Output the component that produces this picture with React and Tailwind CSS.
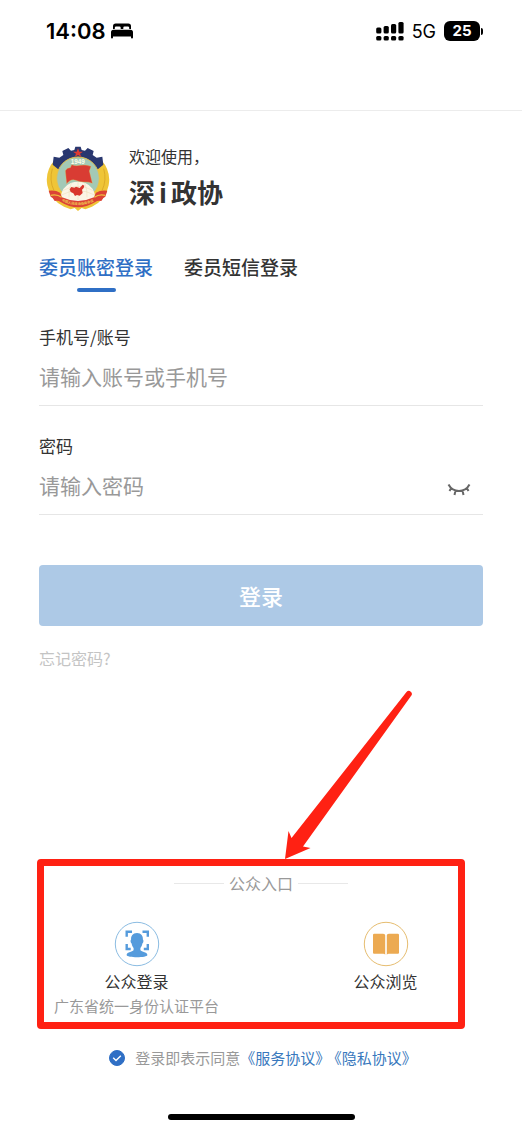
import React from "react";

function BedIcon() {
  return (
    <svg viewBox="0 0 22 16" className="h-4 w-[22px]" fill="#000" aria-hidden="true">
      <path d="M2 6V3.2A2.7 2.7 0 0 1 4.700.5h12.600A2.700 2.700 0 0 1 20 3.200V6h-1.800V4.800a1.300 1.300 0 0 0-1.300-1.300h-3.300a1.300 1.300 0 0 0-1.300 1.300V6H9.700V4.800a1.300 1.300 0 0 0-1.300-1.300H5.100a1.300 1.300 0 0 0-1.300 1.300V6z" />
      <path d="M2.500 6.800h17A2.500 2.500 0 0 1 22 9.300v5.200a1 1 0 0 1-2 0V13.500H2v1a1 1 0 0 1-2 0V9.300a2.500 2.500 0 0 1 2.500-2.500z" />
    </svg>
  );
}

function SignalIcon() {
  return (
    <svg viewBox="0 0 28 19" className="h-[19px] w-7" fill="#000" aria-hidden="true">
      <rect x="0.200" y="5.500" width="5.200" height="6" rx="1.500" />
      <rect x="7.600" y="4" width="5.200" height="7.500" rx="1.500" />
      <rect x="15" y="2" width="5.200" height="9.500" rx="1.500" />
      <rect x="22.400" y="0" width="5.200" height="11.500" rx="1.500" />
      <rect x="0.200" y="14" width="5.200" height="4.500" rx="1.500" />
      <rect x="7.600" y="14" width="5.200" height="4.500" rx="1.500" />
      <rect x="15" y="14" width="5.200" height="4.500" rx="1.500" />
      <rect x="22.400" y="14" width="5.200" height="4.500" rx="1.500" />
    </svg>
  );
}

function Emblem() {
  return (
    <svg viewBox="30 24 192 198" className="h-[66px] w-16 shrink-0" role="img" aria-label="政协会徽">
      <path d="M56 66Q26 100 34 142Q42 186 84 206L104 214 116 210 126 219 137 210 148 214 168 206Q210 186 218 142Q226 100 196 66L126 60Z" fill="#efc537" />
      <path d="M49 92Q39 126 54 158M203 92Q213 126 198 158" fill="none" stroke="#dcab28" strokeWidth="3" />
      <path
        d="M50 80 53 56 70 59 82 51 79 39 97 30 105 38 115 36 118 26H134L137 36 147 38 155 30 173 39 170 51 182 59 199 56 202 80 178 100H74Z"
        fill="#29376f"
      />
      <circle cx="126" cy="121" r="64" fill="#a3c9b6" stroke="#e7c34c" strokeWidth="3" />
      <path d="M126 31l4 10h11l-9 6 4 10-10-6-10 6 4-10-9-6h11z" fill="#dd3b32" />
      <text x="125" y="78" textAnchor="middle" className="font-['Liberation_Sans',sans-serif] text-[19px] font-bold" fill="#fffce8">1949</text>
      <path d="M74 180Q76 147 104 135q22-8 44 0 28 12 30 45-24 14-52 14t-52-14z" fill="#fbf5e6" />
      <g fill="none" stroke="#e8d6a8" strokeWidth="1.200">
        <path d="M82 157q44-24 88 0M76 171q50-26 100 0M126 131v55M106 135q-9 23-7 43M146 135q9 23 7 43" />
      </g>
      <path d="M88 98q5-10 15-9l4-9q12 5 26 2t32 3l-5 14 9 37q-12-5-24-4t-26-5-27 10z" fill="#d93c33" stroke="#edc14b" strokeWidth="1" />
      <path d="M106 147l9 2 5-3 11 4 9-10 5 3-2 7-5 5 2 10-9 8-8-2-6 3-5-8-8-4-3-8z" fill="#d9362d" />
      <path d="M38 158Q58 155 72 164L78 178Q126 200 174 178L180 164Q194 155 214 158L208 176 202 180 196 189Q186 186 178 192 152 208 126 208T74 192Q66 186 56 189L50 180 44 176Z" fill="#dc4236" />
      <path d="M44 172Q62 167 77 178M208 172Q190 167 175 178" fill="none" stroke="#efc03f" strokeWidth="4" />
      <path id="ribbon" d="M77 189Q126 213 178 189" fill="none" />
      <text className="font-['Noto_Sans_CJK_SC',sans-serif] text-[10px] font-bold" fill="#f0c750">
        <textPath href="#ribbon">中国人民政治协商会议</textPath>
      </text>
    </svg>
  );
}

function ClosedEyeIcon() {
  return (
    <svg viewBox="0 0 24 16" className="h-4 w-6" fill="none" stroke="#666" strokeWidth="2" aria-hidden="true">
      <path d="M1.500 3.500Q5 10 12 10T22.500 3.500M4.500 6.500 2.500 10M8.500 9.500l-1 4.500M15.500 9.500l1 4.500M19.500 6.500 21.500 10" />
    </svg>
  );
}

function FaceIcon() {
  return (
    <svg viewBox="0 0 46 46" className="size-[46px]" aria-hidden="true">
      <circle cx="23" cy="23" r="21.700" fill="none" stroke="#8bbce2" />
      <path d="M12.700 15.800v-5h5.300M28.500 10.800h5.300v5M12.700 23v5h4M33.800 23v5h-4" fill="none" stroke="#559bdc" strokeWidth="2.400" />
      <path
        d="M23 12c4.300 0 6.200 3 5.900 6.500.8.400.8 3-.5 4-.4 2.300-1.300 3.600-2 4.500v2c0 1.700 7 1.800 7 5 0 3-20.800 3-20.800 0 0-3.200 7-3.300 7-5v-2c-.7-.9-1.600-2.200-2-4.500-1.300-1-1.300-3.600-.5-4C16.800 15 18.700 12 23 12z"
        fill="#559bdc"
      />
    </svg>
  );
}

function BookIcon() {
  return (
    <svg viewBox="0 0 46 46" className="size-[46px]" aria-hidden="true">
      <circle cx="23" cy="23" r="21.700" fill="none" stroke="#e6bd70" />
      <path d="M10 14q0-1.200 1.200-1.200h9q2 0 2 1.500v19.500q-.5-1-2-1H11q-1 0-1-1zM36 14q0-1.200-1.200-1.200h-9q-2 0-2 1.500v19.500q.5-1 2-1H35q1 0 1-1z" fill="#ecaa52" />
    </svg>
  );
}

function Field({ id, label, type, placeholder, children }) {
  return (
    <div className="h-[109px] pt-[13px]">
      <label htmlFor={id} className="block text-[17px] leading-6 text-[#333]">{label}</label>
      <div className="mt-[11px] flex h-[46px] items-start border-b border-[#e6e6e6]">
        <input
          id={id}
          type={type}
          placeholder={placeholder}
          className="h-8 min-w-0 flex-1 bg-transparent text-[21px] text-[#333] outline-none placeholder:text-[#999]"
        />
        {children}
      </div>
    </div>
  );
}

function Entry({ icon, title, note }) {
  return (
    <a href="#" className="flex flex-col items-center">
      {icon}
      <span className="mt-0.5 text-[16px] leading-6 text-[#333]">{title}</span>
      {note && <span className="mt-px text-[15px] leading-6 text-[#999]">{note}</span>}
    </a>
  );
}

export default function App() {
  return (
    <div className="flex min-h-screen flex-col bg-white font-['Noto_Sans_CJK_SC',sans-serif]">
      <header className="flex h-[111px] items-start justify-between border-b border-[#ececec] pt-[17px] pr-[39px] pl-[46px] font-[Inter,sans-serif] text-black">
        <div className="flex h-7 items-center gap-[5px]">
          <time className="text-[22px] font-semibold">14:08</time>
          <BedIcon />
        </div>
        <div className="flex h-7 items-center">
          <SignalIcon />
          <span className="ml-2 text-[18px]">5G</span>
          <span className="ml-2 flex h-5 w-9 items-center justify-center rounded-md bg-black text-[15px] font-bold text-white">25</span>
          <span className="ml-px h-[7px] w-0.5 rounded-r-full bg-black" />
        </div>
      </header>

      <main className="flex flex-1 flex-col">
        <div className="px-[39px] pt-[35px]">
          <div className="flex items-start gap-[19px] pl-[7px]">
            <Emblem />
            <div className="text-[#333]">
              <p className="text-[16px] leading-5">欢迎使用，</p>
              <h1 className="mt-1.5 text-[26px] leading-10 font-bold">深<span className="mx-1">i</span>政协</h1>
            </div>
          </div>

          <div role="tablist" className="mt-[41px] flex gap-[31px] text-[19px] leading-7 font-medium">
            <button type="button" role="tab" aria-selected="true" className="flex flex-col items-center text-[#2f6fc5]">
              委员账密登录
              <span className="mt-[7px] h-1 w-[39px] rounded-full bg-[#2f6fc5]" />
            </button>
            <button type="button" role="tab" aria-selected="false" className="flex flex-col items-center text-[#333]">委员短信登录</button>
          </div>

          <form className="mt-5" onSubmit={(e) => e.preventDefault()}>
            <Field id="account" label="手机号/账号" type="text" placeholder="请输入账号或手机号" />
            <Field id="password" label="密码" type="password" placeholder="请输入密码">
              <button type="button" aria-label="显示密码" className="mt-3 mr-3"><ClosedEyeIcon /></button>
            </Field>
            <button type="submit" className="mt-[35px] h-[61px] w-full rounded bg-[#adc9e6] text-[22px] font-medium text-white">登录</button>
          </form>
          <a href="#" className="mt-5 inline-block text-[16px] leading-6 text-[#c4c4c4]">忘记密码?</a>
        </div>

        <section className="relative mt-auto h-[170px] px-3 pt-3">
          <div className="flex items-center justify-center gap-[5px]">
            <span className="h-px w-[50px] bg-[#e8e8e8]" />
            <h2 className="text-[16px] leading-6 text-[#999]">公众入口</h2>
            <span className="h-px w-[50px] bg-[#e8e8e8]" />
          </div>
          <div className="mt-[26px] grid grid-cols-2">
            <Entry icon={<FaceIcon />} title="公众登录" note="广东省统一身份认证平台" />
            <Entry icon={<BookIcon />} title="公众浏览" />
          </div>
          <div className="pointer-events-none absolute top-0 right-[57px] bottom-0 left-[37px] rounded border-[7px] border-[#ff2113]" />
          <svg viewBox="0 0 128 170" className="pointer-events-none absolute bottom-full left-[285px] h-[170px] w-32" fill="#ff2113" aria-hidden="true">
            <path d="M0 170 3.500 142 6.500 149 121.500 3a3 3 0 0 1 4.500 4L18 157.500 25.500 159z" />
          </svg>
        </section>

        <div className="mt-[17px] flex items-center justify-center pl-1">
          <span className="grid size-4 place-items-center">
            <input id="agree" type="checkbox" defaultChecked className="peer col-start-1 row-start-1 size-4 appearance-none rounded-full border border-[#2f6fc5] checked:bg-[#2f6fc5]" />
            <svg viewBox="0 0 16 16" className="pointer-events-none invisible col-start-1 row-start-1 size-4 peer-checked:visible" fill="none" stroke="#fff" strokeWidth="1.400" aria-hidden="true">
              <path d="M4.200 7.800 7 10.500 11.800 5.700" />
            </svg>
          </span>
          <p className="ml-[10px] text-[15px] leading-6 text-[#999]">
            <label htmlFor="agree">登录即表示同意</label>
            <a href="#" className="text-[#3878bd]">《服务协议》</a>
            <a href="#" className="ml-1 text-[#3878bd]">《隐私协议》</a>
          </p>
        </div>
      </main>

      <footer className="flex h-[60px] items-end justify-center pb-[10px]">
        <div className="h-[6px] w-[187px] rounded-full bg-black" />
      </footer>
    </div>
  );
}
